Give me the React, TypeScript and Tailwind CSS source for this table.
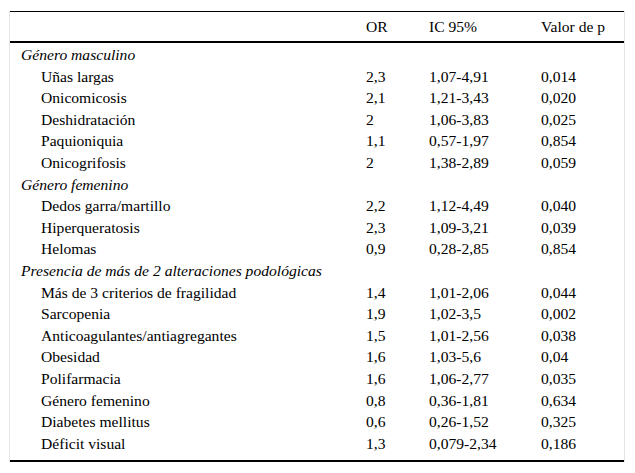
const groups: { title: string; rows: [string, string, string, string][] }[] = [
  {
    title: "Género masculino",
    rows: [
      ["Uñas largas", "2,3", "1,07-4,91", "0,014"],
      ["Onicomicosis", "2,1", "1,21-3,43", "0,020"],
      ["Deshidratación", "2", "1,06-3,83", "0,025"],
      ["Paquioniquia", "1,1", "0,57-1,97", "0,854"],
      ["Onicogrifosis", "2", "1,38-2,89", "0,059"],
    ],
  },
  {
    title: "Género femenino",
    rows: [
      ["Dedos garra/martillo", "2,2", "1,12-4,49", "0,040"],
      ["Hiperqueratosis", "2,3", "1,09-3,21", "0,039"],
      ["Helomas", "0,9", "0,28-2,85", "0,854"],
    ],
  },
  {
    title: "Presencia de más de 2 alteraciones podológicas",
    rows: [
      ["Más de 3 criterios de fragilidad", "1,4", "1,01-2,06", "0,044"],
      ["Sarcopenia", "1,9", "1,02-3,5", "0,002"],
      ["Anticoagulantes/antiagregantes", "1,5", "1,01-2,56", "0,038"],
      ["Obesidad", "1,6", "1,03-5,6", "0,04"],
      ["Polifarmacia", "1,6", "1,06-2,77", "0,035"],
      ["Género femenino", "0,8", "0,36-1,81", "0,634"],
      ["Diabetes mellitus", "0,6", "0,26-1,52", "0,325"],
      ["Déficit visual", "1,3", "0,079-2,34", "0,186"],
    ],
  },
];

const cols = "grid grid-cols-[346px_63px_112px_1fr]";

export default function App() {
  return (
    <div className="w-[635px] h-[473px] bg-white pt-[11px] pl-[9px] text-[15.6px] text-black font-['Liberation_Serif','Times_New_Roman',serif]">
      <div className="w-[616px] border-x border-[#e4e4e4]">
        <div className="border-t border-black">
          <div className={`${cols} h-[31px] items-center border-b-2 border-black`}>
            <div />
            <div className="pl-[10px]">OR</div>
            <div className="pl-[10px]">IC 95%</div>
            <div className="pl-[10px]">Valor de p</div>
          </div>
          <div className="pt-px pb-[6px] border-b-2 border-black">
            {groups.map((g) => (
              <div key={g.title}>
                <div className="h-[21.6px] leading-[21.6px] pl-[11px] italic">{g.title}</div>
                {g.rows.map((r) => (
                  <div key={r[0]} className={`${cols} h-[21.6px] leading-[21.6px]`}>
                    <div className="pl-[31px]">{r[0]}</div>
                    <div className="pl-[10px]">{r[1]}</div>
                    <div className="pl-[10px]">{r[2]}</div>
                    <div className="pl-[10px]">{r[3]}</div>
                  </div>
                ))}
              </div>
            ))}
          </div>
        </div>
      </div>
    </div>
  );
}
